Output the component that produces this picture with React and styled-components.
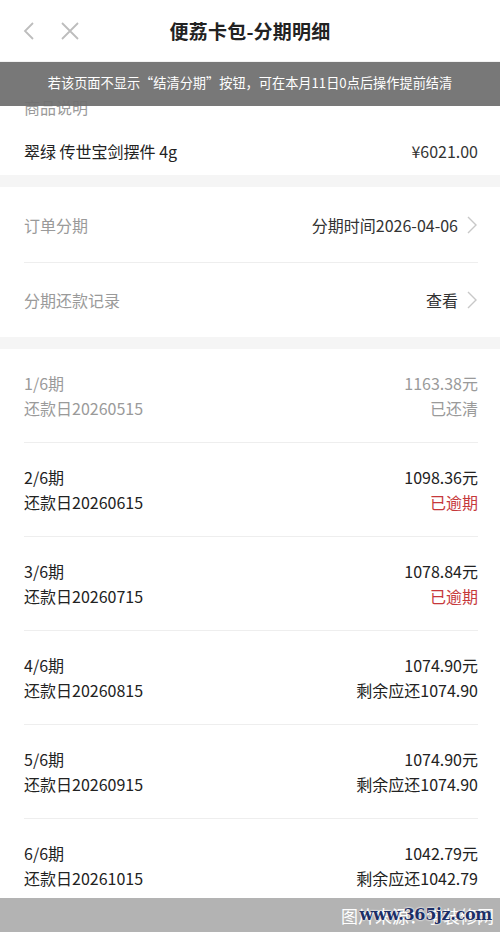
import styled, { createGlobalStyle } from 'styled-components';

const GlobalStyle = createGlobalStyle`
  html, body {
    margin: 0;
    padding: 0;
    background: #f5f5f5;
  }
  body {
    font-family: "Noto Sans CJK SC", "Noto Sans", sans-serif;
    -webkit-font-smoothing: antialiased;
  }
`;

const Page = styled.div`
  width: 500px;
  height: 932px;
  overflow: hidden;
  position: relative;
  background: #f5f5f5;
`;

const Header = styled.div`
  height: 62px;
  background: #fff;
  display: grid;
  grid-template-columns: 120px 1fr 120px;
  align-items: center;
  border-bottom: 1px solid #f2f2f2;
  box-sizing: border-box;
`;

const NavIcons = styled.div`
  display: flex;
  align-items: center;
  gap: 24px;
  padding-left: 22px;
`;

const Title = styled.h1`
  margin: 0;
  text-align: center;
  font-size: 19px;
  font-weight: 700;
  color: #222;
  letter-spacing: 0.2px;
`;

const Toast = styled.div`
  position: absolute;
  top: 62px;
  left: 0;
  right: 0;
  height: 44px;
  background: rgba(112, 112, 112, 0.94);
  color: #fff;
  font-size: 13.2px;
  display: flex;
  align-items: center;
  justify-content: center;
  padding-bottom: 4px;
  box-sizing: border-box;
`;

const Section = styled.div`
  background: #fff;
  padding: ${(p) => p.$pad || '0 22px 0 24px'};
  margin-bottom: 12px;
`;

const Label = styled.div`
  font-size: 16px;
  line-height: 24px;
  color: #9a9a9a;
`;

const Row = styled.div`
  display: flex;
  justify-content: space-between;
  align-items: center;
  height: ${(p) => p.$h || 'auto'};
  font-size: 16px;
  color: #222;
  border-bottom: ${(p) => (p.$line ? '1px solid #eee' : 'none')};
`;

const Value = styled.div`
  display: flex;
  align-items: center;
  gap: 8px;
  font-size: 16px;
  color: #333;
`;

const Item = styled.div`
  padding: 22px 0 21px;
  border-bottom: ${(p) => (p.$last ? 'none' : '1px solid #eee')};
  display: grid;
  grid-template-columns: 1fr auto;
  font-size: 16px;
  line-height: 25px;
  color: ${(p) => (p.$paid ? '#9a9a9a' : '#222')};
`;

const Right = styled.span`
  text-align: right;
  color: ${(p) => p.$color || 'inherit'};
`;

const Watermark = styled.div`
  position: absolute;
  left: 0;
  right: 0;
  bottom: 0;
  height: 34px;
  background: #b3b3b3;
  display: flex;
  align-items: center;
  justify-content: flex-end;
  padding-right: 6px;
  font-size: 17px;
  color: #fff;
`;

const Stamp = styled.span`
  position: absolute;
  right: 8px;
  top: 7px;
  font-family: "DejaVu Serif", "Liberation Serif", serif;
  font-weight: 700;
  font-size: 16px;
  color: #1c2f66;
  text-shadow: 0 0 2px #fff, 0 0 2px #fff;
  letter-spacing: -0.3px;
`;

const Back = () => (
  <svg width="14" height="20" viewBox="0 0 14 20">
    <path d="M11 2 L3 10 L11 18" fill="none" stroke="#bdbdbd" strokeWidth="1.8" />
  </svg>
);

const Close = () => (
  <svg width="20" height="20" viewBox="0 0 20 20">
    <path d="M2 2 L18 18 M18 2 L2 18" fill="none" stroke="#bdbdbd" strokeWidth="1.8" />
  </svg>
);

const Chevron = () => (
  <svg width="12" height="20" viewBox="0 0 12 20">
    <path d="M2 2 L10 10 L2 18" fill="none" stroke="#c8c8c8" strokeWidth="1.4" />
  </svg>
);

const periods = [
  { n: '1/6期', date: '20260515', amount: '1163.38元', status: '已还清', paid: true },
  { n: '2/6期', date: '20260615', amount: '1098.36元', status: '已逾期', red: true },
  { n: '3/6期', date: '20260715', amount: '1078.84元', status: '已逾期', red: true },
  { n: '4/6期', date: '20260815', amount: '1074.90元', status: '剩余应还1074.90' },
  { n: '5/6期', date: '20260915', amount: '1074.90元', status: '剩余应还1074.90' },
  { n: '6/6期', date: '20261015', amount: '1042.79元', status: '剩余应还1042.79' },
];

export default function App() {
  return (
    <Page>
      <GlobalStyle />
      <Header>
        <NavIcons>
          <Back />
          <Close />
        </NavIcons>
        <Title>便荔卡包-分期明细</Title>
        <div />
      </Header>

      <Section $pad="33px 22px 12px 24px">
        <Label>商品说明</Label>
        <Row style={{ marginTop: 20, lineHeight: '24px' }}>
          <span>翠绿 传世宝剑摆件 4g</span>
          <Value>¥6021.00</Value>
        </Row>
      </Section>

      <Section>
        <Row $h="75px" $line>
          <Label>订单分期</Label>
          <Value>
            分期时间2026-04-06
            <Chevron />
          </Value>
        </Row>
        <Row $h="74px">
          <Label>分期还款记录</Label>
          <Value>
            查看
            <Chevron />
          </Value>
        </Row>
      </Section>

      <Section $pad="0 22px 0 24px">
        {periods.map((p, i) => (
          <Item key={p.n} $paid={p.paid} $last={i === periods.length - 1}>
            <span>{p.n}</span>
            <Right>{p.amount}</Right>
            <span>还款日{p.date}</span>
            <Right $color={p.red ? '#c6383b' : undefined}>{p.status}</Right>
          </Item>
        ))}
      </Section>

      <Toast>若该页面不显示“结清分期”按钮，可在本月11日0点后操作提前结清</Toast>

      <Watermark>
        图片来源：学装修网
        <Stamp>www.365jz.com</Stamp>
      </Watermark>
    </Page>
  );
}
